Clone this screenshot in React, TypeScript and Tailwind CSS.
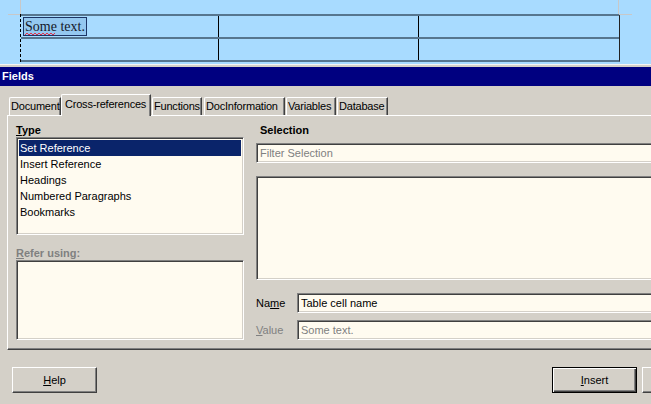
import React from 'react'

const sunken =
    'border border-t-[#808080] border-l-[#808080] border-b-white border-r-white shadow-[inset_1px_1px_0_#404040,inset_-1px_-1px_0_#d4d0c8] bg-[#fffbf0]'

const tabs = [
    { label: 'Document', cls: 'ml-[2px] w-[52px] pl-[1px]' },
    { label: 'Cross-references', cls: 'w-[90px] pl-[3px]', active: true },
    { label: 'Functions', cls: 'ml-[1px] w-[50px] pl-[1px]' },
    { label: 'DocInformation', cls: 'ml-[2px] w-[81px] pl-[1px]' },
    { label: 'Variables', cls: 'ml-[1px] w-[50px] pl-[1px]' },
    { label: 'Database', cls: 'ml-[1px] w-[51px] pl-[1px]' },
]

const types = ['Set Reference', 'Insert Reference', 'Headings', 'Numbered Paragraphs', 'Bookmarks']

const Button = ({ children, isDefault }: { children?: React.ReactNode; isDefault?: boolean }) => (
    <div
        className={
            'flex h-[26px] w-[85px] shrink-0 items-center justify-center border ' +
            (isDefault
                ? 'border-black shadow-[inset_1px_1px_0_#fff,inset_-1px_-1px_0_#404040,inset_-2px_-2px_0_#808080]'
                : 'border-t-white border-l-white border-b-[#404040] border-r-[#404040] shadow-[inset_-1px_-1px_0_#808080]')
        }
    >
        {children}
    </div>
)

export default function App() {
    return (
        <div className="h-[404px] w-[651px] overflow-hidden bg-[#d4d0c8] font-['Liberation_Sans',Arial,sans-serif] text-[11px] text-black">
            {/* document area */}
            <div className="relative h-[64px] bg-[#a8dbff] pl-[20px] pt-[14px]">
                <div className="absolute left-[20px] top-0 h-[14px] w-px bg-[#c8c8c8]" />
                <div className="absolute left-[8px] top-[14px] h-px w-[12px] bg-[#c8c8c8]" />
                <div className="absolute left-[618px] top-0 h-[14px] w-px bg-[#c8c8c8]" />
                <div className="absolute left-[619px] top-[14px] h-px w-[13px] bg-[#c8c8c8]" />
                <div className="flex w-[600px]">
                    <div className="w-px border-l border-dashed border-black" />
                    <div className="flex-1 border-y-2 border-[#56768f] border-r border-r-[#222]">
                        <div className="grid h-[21px] grid-cols-[198px_200px_199px]">
                            <div className="relative border-r border-black pl-[2px] pt-px">
                                <span className="relative inline-block h-[19px] border border-[#1c3566] bg-[#94c8f0] px-px font-['Liberation_Serif','Times_New_Roman',serif] text-[14px] leading-[17px] text-[#15182a]">
                                    Some text.
                                    <svg className="absolute left-[1px] top-[14px]" width="31" height="4" viewBox="0 0 31 4">
                                        <path d="M0 3 L2 1 L4 3 L6 1 L8 3 L10 1 L12 3 L14 1 L16 3 L18 1 L20 3 L22 1 L24 3 L26 1 L28 3 L30 1" fill="none" stroke="#e0304a" strokeWidth="1" />
                                    </svg>
                                </span>
                            </div>
                            <div className="border-r border-black" />
                            <div />
                        </div>
                        <div className="h-[2px] bg-[#56768f]" />
                        <div className="grid h-[21px] grid-cols-[198px_200px_199px]">
                            <div className="border-r border-black" />
                            <div className="border-r border-black" />
                            <div />
                        </div>
                    </div>
                </div>
            </div>
            <div className="h-[3px] border-t border-[#f4f4f4] bg-[#d4d0c8]" />
            {/* title bar */}
            <div className="h-[19px] bg-[#000080] pl-[2px] font-bold leading-[19px] text-white">Fields</div>

            {/* tabs + page */}
            <div className="pl-[7px] pt-[8px]">
                <div className="relative z-10 flex h-[21px] items-end tracking-[-0.2px]">
                    {tabs.map((t) =>
                        t.active ? (
                            <div
                                key={t.label}
                                className={`-mb-px h-[22px] shrink-0 whitespace-nowrap rounded-tl-[2px] border-l border-t border-white border-r border-r-[#404040] bg-[#d4d0c8] pt-[3px] leading-[13px] shadow-[inset_-1px_0_0_#808080] ${t.cls}`}
                            >
                                {t.label}
                            </div>
                        ) : (
                            <div
                                key={t.label}
                                className={`h-[18px] shrink-0 whitespace-nowrap rounded-tl-[2px] border-l border-t border-white border-r border-r-[#404040] pt-[2px] leading-[13px] shadow-[inset_-1px_0_0_#808080] ${t.cls}`}
                            >
                                {t.label}
                            </div>
                        ),
                    )}
                </div>
                <div className="flex h-[235px] w-[700px] border-l border-t border-white border-b border-b-[#404040] pl-[8px] pt-[8px] shadow-[inset_0_-1px_0_#808080]">
                    {/* left column */}
                    <div className="flex w-[228px] flex-col">
                        <div className="h-[13px] font-bold leading-[13px]">
                            <u>T</u>ype
                        </div>
                        <div className={`h-[98px] p-[2px] ${sunken}`}>
                            {types.map((t, i) => (
                                <div
                                    key={t}
                                    className={'h-[16px] pl-px leading-[16px] ' + (i === 0 ? 'bg-[#0a246a] text-white' : '')}
                                >
                                    {t}
                                </div>
                            ))}
                        </div>
                        <div className="mt-[12px] h-[13px] font-bold leading-[13px] text-[#808080]">
                            <u>R</u>efer using:
                        </div>
                        <div className={`h-[80px] ${sunken}`} />
                    </div>
                    {/* right column */}
                    <div className="ml-[12px] flex flex-1 flex-col">
                        <div className="h-[13px] pl-[4px] font-bold leading-[13px]">Selection</div>
                        <div className={`mt-[6px] h-[20px] pl-[3px] leading-[18px] text-[#808080] ${sunken}`}>Filter Selection</div>
                        <div className={`mt-[13px] h-[104px] ${sunken}`} />
                        <div className="mt-[13px] flex h-[20px] items-center">
                            <div className="w-[41px]">
                                Na<u>m</u>e
                            </div>
                            <div className={`h-[20px] flex-1 pl-[3px] leading-[18px] ${sunken}`}>Table cell name</div>
                        </div>
                        <div className="mt-[7px] flex h-[20px] items-center">
                            <div className="w-[41px] text-[#808080]">
                                <u>V</u>alue
                            </div>
                            <div className={`h-[20px] flex-1 pl-[3px] leading-[18px] text-[#808080] ${sunken}`}>Some text.</div>
                        </div>
                    </div>
                </div>
            </div>

            {/* buttons */}
            <div className="mt-[17px] flex w-[800px] pl-[12px]">
                <Button>
                    <span>
                        <u>H</u>elp
                    </span>
                </Button>
                <div className="ml-[455px]">
                    <Button isDefault>
                        <span>
                            <u>I</u>nsert
                        </span>
                    </Button>
                </div>
                <div className="ml-[5px]">
                    <Button />
                </div>
            </div>
        </div>
    )
}
